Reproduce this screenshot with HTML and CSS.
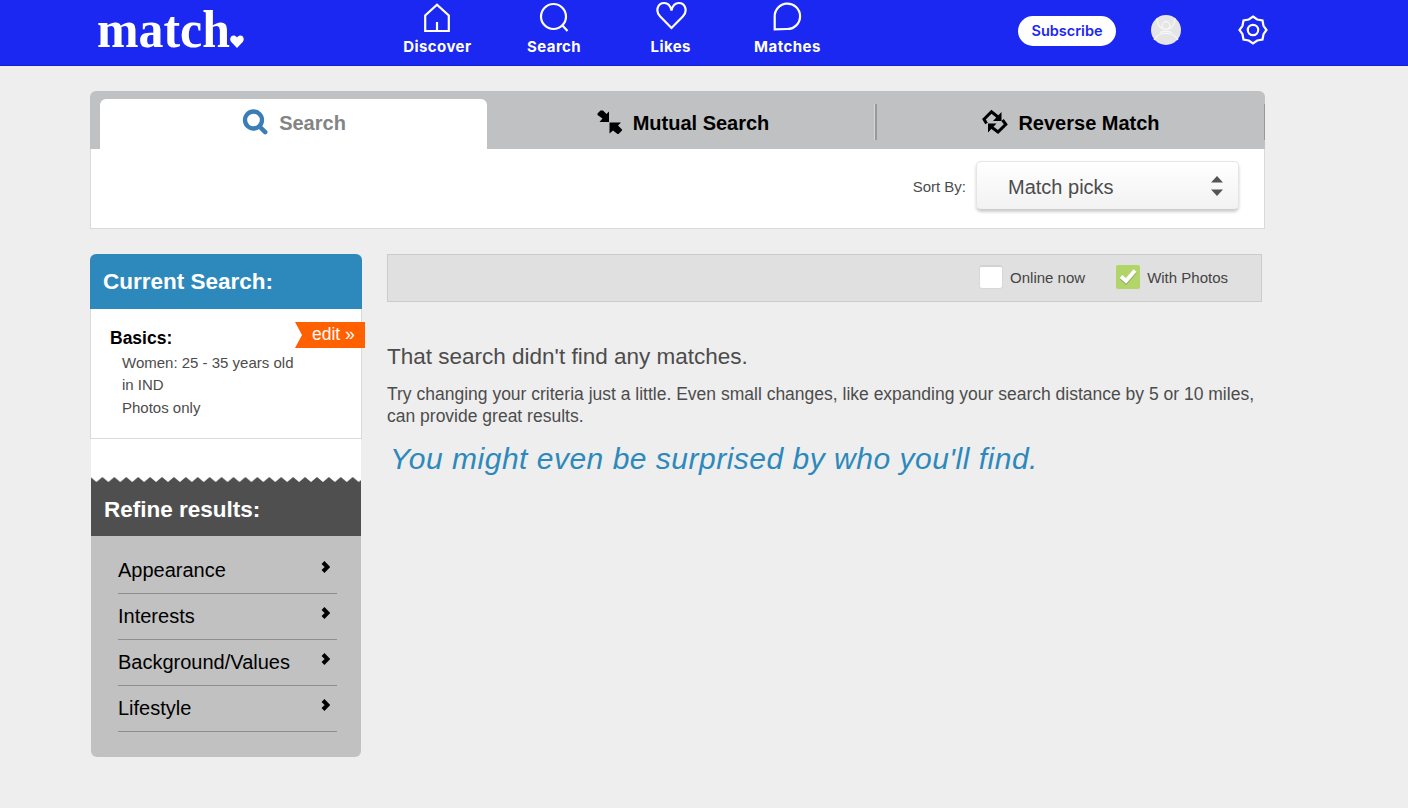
FILE: index.html
```
<!DOCTYPE html>
<html lang="en">
<head>
<meta charset="utf-8">
<title>Match - Search</title>
<link rel="stylesheet" href="styles.css">
</head>
<body>
<header class="topbar">
  <a class="logo" aria-label="match">
    <svg width="150" height="62" viewBox="0 0 150 62"><text class="logo-text" x="0" y="47" textLength="133" lengthAdjust="spacingAndGlyphs">match</text><path d="M140 48 L134.3 42 C131 38 136 32.500 140 37.500 C144 32.500 149 38 145.700 42Z" fill="#fff"/></svg>
  </a>
  <nav class="nav">
    <a class="nav-item"><svg width="34" height="34" viewBox="0 0 34 34"><path d="M5.200 31V15.500L17 4.700l11.800 10.800V31ZM17 31v-9"/></svg><span>Discover</span></a>
    <a class="nav-item"><svg width="34" height="34" viewBox="0 0 34 34"><circle cx="16.500" cy="16.500" r="12.500"/><path d="M25 25l5.500 6"/></svg><span>Search</span></a>
    <a class="nav-item"><svg width="34" height="34" viewBox="0 0 34 34"><path d="M17.500 28 6.200 16.500C.8 11 3.800 3 10.200 3c4 0 6.300 3 7.300 7.500C18.500 6 20.800 3 24.800 3c6.400 0 9.400 8 4 13.500Z"/></svg><span>Likes</span></a>
    <a class="nav-item"><svg width="34" height="34" viewBox="0 0 34 34"><path d="M4.700 29.300V17A12.700 12.700 0 1 1 17.500 29Z"/></svg><span>Matches</span></a>
  </nav>
  <div class="account">
    <a class="subscribe">Subscribe</a>
    <svg class="avatar" width="30" height="30" viewBox="0 0 30 30"><circle cx="15" cy="15" r="15" fill="#e5e5e5"/><g fill="none" stroke="#f8f8f8" stroke-width="1.200"><path d="M6 3c0 15.500 18 15.500 18 0"/><circle cx="15" cy="10.500" r="3.800"/><path d="M3 25c5-9 19-9 24 0M9 17.500c4-1.500 8-1.500 12 0"/></g></svg>
    <svg class="gear" width="30" height="30" viewBox="0 0 30 30"><path d="M15 1.500 19.200 4.500 24.500 5.500 25.500 10.800 28.500 15 25.500 19.200 24.500 24.500 19.200 25.500 15 28.500 10.800 25.500 5.500 24.500 4.500 19.200 1.500 15 4.500 10.800 5.500 5.500 10.800 4.500Z"/><circle cx="15" cy="15" r="5.200"/></svg>
  </div>
</header>
<main class="page">
  <section class="search-panel">
    <div class="tabs">
      <a class="tab tab-active"><svg width="26" height="26" viewBox="0 0 26 26"><circle cx="11.500" cy="11" r="8.500" fill="none" stroke="#3a7db7" stroke-width="4.300"/><path d="M17.500 17.500l5.700 5.700" stroke="#3a7db7" stroke-width="4.500" stroke-linecap="round"/></svg><span>Search</span></a>
      <a class="tab"><svg width="26" height="26" viewBox="0 0 26 26"><path d="M1.500 4.500 4.500 1.500h2.500L10.500 5l2.500-2.500v10.500H3.500L6.500 9.500 1.500 6ZM13.500 13.500h11.500l-3 3 4 4v1l-3.500 3.500h-1L17 21.500l-3.500 3Z"/></svg><span>Mutual Search</span></a>
      <a class="tab"><svg width="26" height="26" viewBox="0 0 26 26"><path d="M4.500 14.500 2 10.300 9.500 2.800l6.500 5.200M20.500 11l3.300 4.300L16 23 10 18.500" fill="none" stroke="#000" stroke-width="3"/><path d="M19.500 3v9H11ZM6 23.500V14.500H14.500Z"/></svg><span>Reverse Match</span></a>
    </div>
    <div class="sort-row">
      <label>Sort By:</label>
      <div class="select"><span>Match picks</span><svg width="12" height="20" viewBox="0 0 12 20"><path d="M0 6.500 6 0l6 6.500ZM0 13.500h12L6 20Z" fill="#555"/></svg></div>
    </div>
  </section>
  <div class="columns">
    <aside class="sidebar">
      <h2 class="current-title">Current Search:</h2>
      <div class="current">
        <h3>Basics:</h3>
        <ul><li>Women: 25 - 35 years old</li><li>in IND</li><li>Photos only</li></ul>
        <a class="edit">edit »</a>
      </div>
      <div class="tear"><svg width="270" height="6"><defs><pattern id="zigzag" width="11.920" height="6" patternUnits="userSpaceOnUse" x="-.5"><path d="M0 0 5.960 5 11.920 0V6H0Z" fill="#4f4f4f"/></pattern></defs><rect width="270" height="6" fill="url(#zigzag)"/></svg></div>
      <h2 class="refine-title">Refine results:</h2>
      <div class="filters">
        <a><span>Appearance</span><svg width="9" height="12" viewBox="0 0 9 12"><path d="M2 1.500l4.500 4.500L2 10.500"/></svg></a>
        <a><span>Interests</span><svg width="9" height="12" viewBox="0 0 9 12"><path d="M2 1.500l4.500 4.500L2 10.500"/></svg></a>
        <a><span>Background/Values</span><svg width="9" height="12" viewBox="0 0 9 12"><path d="M2 1.500l4.500 4.500L2 10.500"/></svg></a>
        <a><span>Lifestyle</span><svg width="9" height="12" viewBox="0 0 9 12"><path d="M2 1.500l4.500 4.500L2 10.500"/></svg></a>
      </div>
    </aside>
    <section class="results">
      <div class="toggles">
        <label><i class="box"></i>Online now</label>
        <label><svg class="checked" width="24" height="24" viewBox="0 0 24 24"><rect width="24" height="24" rx="2" fill="#b1d568"/><path d="M5 12.500l5 4.500 9-10.500" fill="none" stroke="#8f9e6c" stroke-width="4.200"/><path d="M5 11.500l5 4.500 9-10.500" fill="none" stroke="#fff" stroke-width="4"/></svg>With Photos</label>
      </div>
      <h1>That search didn't find any matches.</h1>
      <p>Try changing your criteria just a little. Even small changes, like expanding your search distance by 5 or 10 miles, can provide great results.</p>
      <p class="surprise">You might even be surprised by who you'll find.</p>
    </section>
  </div>
</main>
</body>
</html>
```
FILE: styles.css
```
* { box-sizing: border-box; }
body { margin: 0; min-height: 808px; background: #eee; color: #4c4c4c; font: 15px "Liberation Sans", Arial, sans-serif; }
h1, h2, h3, p, ul { margin: 0; padding: 0; }
ul { list-style: none; }
svg { display: block; flex: none; }

.topbar { height: 66px; display: flex; background: #1b28f2; border-bottom: 1px solid #1320d2; color: #fff; font-family: Inter, sans-serif; }
.logo { width: 282px; padding-left: 97px; }
.logo-text { font: bold 52px "Liberation Serif", serif; fill: #fff; }
.nav { display: flex; padding-left: 97px; width: 565px; }
.nav-item { width: 116.700px; display: flex; flex-direction: column; align-items: center; flex: none; font-size: 15px; font-weight: 700; letter-spacing: .45px; line-height: 20px; }
.nav-item span { margin-top: 3px; }
.nav-item svg, .gear { fill: none; stroke: #fff; stroke-width: 2.200; }
.account { display: flex; align-items: flex-start; padding-left: 171px; }
.subscribe { width: 98px; height: 30px; margin-top: 16px; border-radius: 15px; background: #fff; color: #1b28f2; font-size: 14.500px; font-weight: 600; line-height: 30px; text-align: center; }
.avatar { margin: 15px 0 0 35px; }
.gear { margin: 15px 0 0 57px; }

.page { width: 1175px; margin: 25px 0 0 90px; }
.tabs { height: 58px; display: flex; padding: 8px 0 0 10px; background: #c0c1c3; border-radius: 6px 6px 0 0; }
.tab { position: relative; width: 388px; display: flex; align-items: center; justify-content: center; gap: 10px; padding-bottom: 4px; color: #000; font-size: 20px; font-weight: bold; }
.tab span { padding-top: 2px; }
.tab:nth-child(2) { width: 390px; padding-left: 1px; gap: 11px; }
.tab:not(.tab-active)::after { content: ""; position: absolute; right: 0; top: 5px; width: 2px; height: 36px; border-left: 1px solid #d4d5d6; background: #999; }
.tab:last-child::after { width: 1px; border: 0; }
.tab-active { width: 387px; padding-left: 1px; gap: 11px; background: #fff; border-radius: 6px 6px 0 0; color: #838485; }
.sort-row { height: 80px; display: flex; align-items: flex-start; justify-content: flex-end; gap: 10px; padding: 12px 25px 0 0; background: #fff; border: 1px solid #dadada; border-top: 0; }
.sort-row label { line-height: 52px; }
.select { width: 263px; height: 49px; display: flex; align-items: center; justify-content: space-between; padding: 0 15px 0 31px; border: 1px solid #e5e5e5; border-bottom-color: #ccc; border-radius: 5px; background: linear-gradient(#fff, #f2f2f2); box-shadow: 0 2px 3px #ccc; font-size: 20px; }
.select span { padding-top: 3px; }

.columns { display: flex; align-items: flex-start; gap: 25px; margin-top: 25px; }
.sidebar { width: 272px; }
.current-title, .refine-title { height: 55px; padding-left: 13px; color: #fff; font-size: 22.500px; line-height: 55px; }
.current-title { background: #2d89bb; border-radius: 6px 6px 0 0; }
.current { position: relative; height: 130px; padding: 18px 0 0 19px; background: #fff; border: 1px solid #dadada; border-top: 0; }
.current h3 { color: #000; font-size: 17.500px; line-height: 22px; }
.current ul { padding: 3px 0 0 12px; line-height: 22px; }
.current li:last-child { padding-top: 1px; }
.edit { position: absolute; left: 204px; top: 13px; width: 70px; height: 26px; padding-left: 17px; background: #ff6000; color: #fff; font-size: 17.500px; line-height: 25px; clip-path: polygon(0 0, 100% 0, 100% 100%, 0 100%, 7px 50%); }
.tear { width: 270px; height: 43px; margin-left: 1px; padding-top: 38px; background: #fff; }
.tear svg { height: 5px; }
.refine-title { width: 270px; height: 54px; margin-left: 1px; background: #4f4f4f; }
.filters { width: 270px; height: 221px; margin-left: 1px; padding: 12px 24px 0 27px; background: #c1c1c1; border-radius: 0 0 6px 6px; color: #000; font-size: 20px; }
.filters a { height: 46px; display: flex; justify-content: space-between; padding: 0 7px 0 0; border-bottom: 1px solid #8d8d8d; line-height: 44px; }
.filters svg { margin-top: 13px; fill: none; stroke: #000; stroke-width: 4; }

.results { width: 875px; }
.toggles { height: 48px; display: flex; align-items: center; justify-content: flex-end; gap: 31px; padding: 0 33px 1px 0; background: #e0e0e0; border: 1px solid #cbcbcb; color: #444; }
.toggles label { display: flex; align-items: center; gap: 7px; }
.toggles .checked { margin-top: -2px; }
.box { width: 24px; height: 24px; margin-top: -1px; background: #fff; border: 1px solid #d8d8d8; border-top: 2px solid #d2d2d2; border-radius: 3px; }
.results h1 { margin-top: 41px; font-size: 22.500px; font-weight: normal; line-height: 28px; }
.results p { margin-top: 12px; font-size: 17.500px; line-height: 22px; }
.results .surprise { margin-top: 12px; padding-left: 3px; color: #2d89bb; font-size: 30px; letter-spacing: .5px; font-style: italic; line-height: 40px; white-space: nowrap; }
```
